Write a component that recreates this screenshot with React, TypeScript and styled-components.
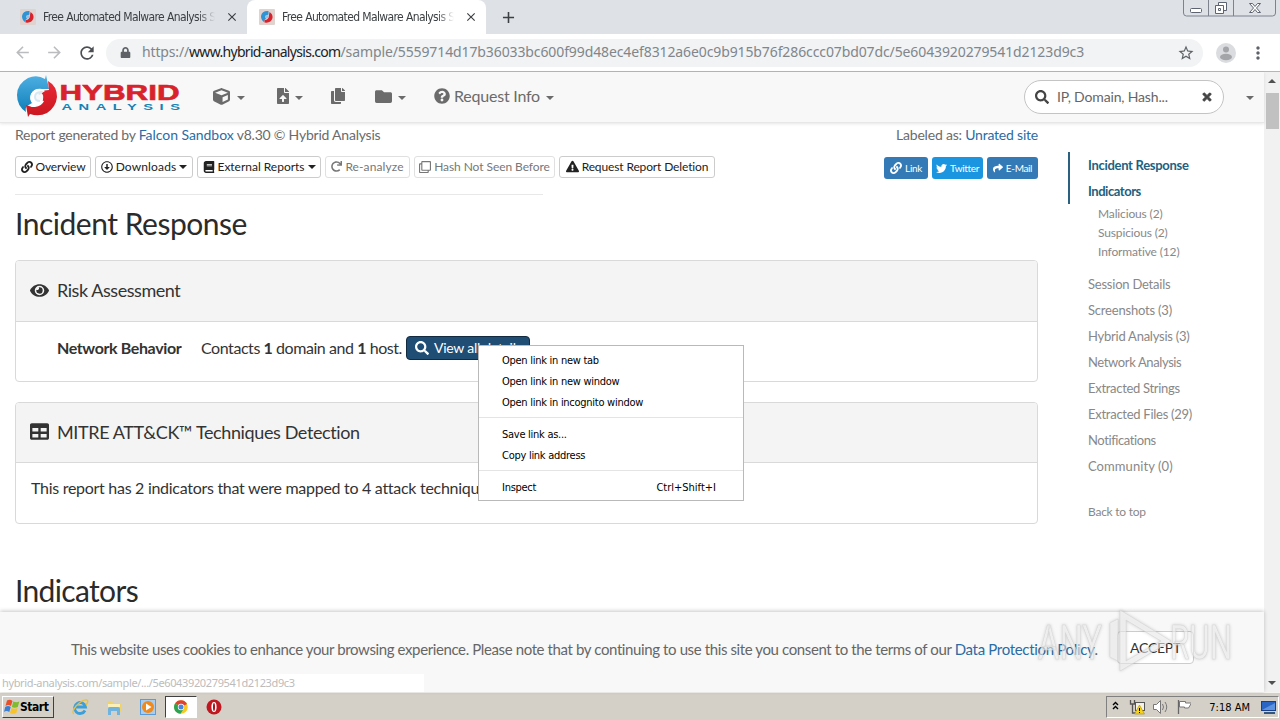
import styled, { createGlobalStyle, css } from "styled-components";
import {
  FaBook,
  FaCopy,
  FaCube,
  FaEye,
  FaExclamationTriangle,
  FaFileUpload,
  FaFolder,
  FaLink,
  FaLock,
  FaQuestionCircle,
  FaRedo,
  FaRegArrowAltCircleDown,
  FaRegClone,
  FaSearch,
  FaShare,
  FaTable,
  FaTimes,
  FaTwitter,
} from "react-icons/fa";
import {
  MdAdd,
  MdArrowBack,
  MdArrowForward,
  MdClose,
  MdMoreVert,
  MdRefresh,
  MdStarBorder,
} from "react-icons/md";

const theme = {
  page: `Lato, "Open Sans", sans-serif`,
  system: `"DejaVu Sans Condensed", "DejaVu Sans", sans-serif`,
  url: `"Noto Sans", sans-serif`,
  link: "#2a6ca5",
  border: "#d9d9d9",
};

const tabs = [
  { title: "Free Automated Malware Analysis Se", active: false },
  { title: "Free Automated Malware Analysis Se", active: true },
];

const sections = [
  { label: "Session Details", ls: -0.22 },
  { label: "Screenshots (3)", ls: -0.2 },
  { label: "Hybrid Analysis (3)", ls: -0.24 },
  { label: "Network Analysis", ls: -0.38 },
  { label: "Extracted Strings", ls: -0.3 },
  { label: "Extracted Files (29)", ls: -0.27 },
  { label: "Notifications", ls: -0.4 },
  { label: "Community (0)", ls: 0.07 },
];

function App() {
  return (
    <>
      <GlobalStyle />
      <Screen>
        <TabStrip>
          {tabs.map((tab, i) => (
            <Tab key={i} $active={tab.active}>
              <Favicon />
              <TabTitle>{tab.title}</TabTitle>
              <MdClose size={14} />
            </Tab>
          ))}
          <NewTab>
            <MdAdd size={19} />
          </NewTab>
          <WindowButtons />
        </TabStrip>

        <Toolbar>
          <NavIcon $muted>
            <MdArrowBack size={19} />
          </NavIcon>
          <NavIcon $muted>
            <MdArrowForward size={19} />
          </NavIcon>
          <NavIcon>
            <MdRefresh size={20} />
          </NavIcon>
          <Omnibox>
            <FaLock size={11} color="#5f6368" />
            <Url>
              <UrlPart $ls={-0.15}>https://</UrlPart>
              <UrlPart $ls={-0.69} $host>www.hybrid-analysis.com</UrlPart>
              <UrlPart $ls={-0.11}>
                /sample/5559714d17b36033bc600f99d48ec4ef8312a6e0c9b915b76f286ccc07bd07dc/5e6043920279541d2123d9c3
              </UrlPart>
            </Url>
            <MdStarBorder size={18} color="#5f6368" />
          </Omnibox>
          <Avatar />
          <MdMoreVert size={20} color="#5f6368" />
        </Toolbar>

        <Viewport>
          <Page>
            <Navbar>
              <Logo />
              <NavItem $width={62} $gap={7}>
                <FaCube size={17} />
                <Caret />
              </NavItem>
              <NavItem $width={55} $gap={4}>
                <FaFileUpload size={16} />
                <Caret />
              </NavItem>
              <NavItem $width={45}>
                <FaCopy size={16} />
              </NavItem>
              <NavItem $width={59}>
                <FaFolder size={17} />
                <Caret />
              </NavItem>
              <NavItem $width={130}>
                <FaQuestionCircle size={16} />
                <NavText>Request Info</NavText>
                <Caret />
              </NavItem>
              <SearchBox>
                <FaSearch size={14} />
                <SearchText>IP, Domain, Hash...</SearchText>
                <FaTimes size={12} stroke="currentColor" strokeWidth={36} />
              </SearchBox>
              <Caret />
            </Navbar>

            <Content>
              <Report>
                <MetaRow>
                  <Text $ls={-0.25}>
                    Report generated by <Link $ls={-0.05}>Falcon Sandbox</Link>
                    <Text $ls={-0.22}> v8.30 © Hybrid Analysis</Text>
                  </Text>
                  <Text $ls={-0.21}>
                    Labeled as: <Link>Unrated site</Link>
                  </Text>
                </MetaRow>
                <ButtonRow>
                  <Button $width={76} $ls={-0.14}>
                    <FaLink />
                    Overview
                  </Button>
                  <Button $width={98} $ls={0.15}>
                    <FaRegArrowAltCircleDown />
                    Downloads
                    <Caret $small />
                  </Button>
                  <Button $width={124} $ls={-0.02}>
                    <FaBook />
                    External Reports
                    <Caret $small />
                  </Button>
                  <Button $width={85} $ls={0.1} $disabled>
                    <FaRedo size={11} />
                    Re-analyze
                  </Button>
                  <Button $width={141} $ls={-0.07} $disabled>
                    <FaRegClone />
                    Hash Not Seen Before
                  </Button>
                  <Button $width={156} $ls={-0.13}>
                    <FaExclamationTriangle size={13} />
                    Request Report Deletion
                  </Button>
                  <ShareGroup>
                    <ShareButton $width={44}>
                      <FaLink size={12} />
                      Link
                    </ShareButton>
                    <ShareButton $width={51} $bg="#1b95e0">
                      <FaTwitter size={11} />
                      Twitter
                    </ShareButton>
                    <ShareButton $width={51}>
                      <FaShare size={10} />
                      E-Mail
                    </ShareButton>
                  </ShareGroup>
                </ButtonRow>
                <Divider />

                <Heading $ls={-0.48}>Incident Response</Heading>

                <Card>
                  <CardHeader $height={61} $ls={-0.44}>
                    <FaEye size={19} />
                    Risk Assessment
                  </CardHeader>
                  <CardBody $height={50} $indent>
                    <Label>Network Behavior</Label>
                    <Text $ls={-0.44}>
                      Contacts <Count>1</Count> domain and <Count>1</Count> host.
                    </Text>
                    <DetailsButton>
                      <FaSearch size={14} />
                      View all details
                    </DetailsButton>
                  </CardBody>
                </Card>

                <Card>
                  <CardHeader $height={60} $ls={-0.38}>
                    <FaTable size={19} />
                    MITRE ATT&amp;CK™ Techniques Detection
                  </CardHeader>
                  <CardBody $height={49}>
                    <Text $ls={-0.285}>
                      This report has 2 indicators that were mapped to 4 attack techniques
                    </Text>
                  </CardBody>
                </Card>

                <Heading $ls={-0.65} $last>
                  Indicators
                </Heading>
              </Report>

              <Sidebar>
                <ActiveGroup>
                  <SideLink $active $ls={-0.3}>Incident Response</SideLink>
                  <SideLink $active $ls={-0.45}>Indicators</SideLink>
                </ActiveGroup>
                <SubList>
                  <SubLink>Malicious (2)</SubLink>
                  <SubLink>Suspicious (2)</SubLink>
                  <SubLink>Informative (12)</SubLink>
                </SubList>
                {sections.map((s) => (
                  <SideLink key={s.label} $ls={s.ls}>
                    {s.label}
                  </SideLink>
                ))}
                <BackToTop>Back to top</BackToTop>
              </Sidebar>
            </Content>

            <CookieBar>
              <CookieText>
                This website uses cookies to enhance your browsing experience. Please note that by
                continuing to use this site you consent to the terms of our{" "}
                <Link $ls={-0.32}>Data Protection Policy</Link>.
              </CookieText>
              <AcceptButton>ACCEPT</AcceptButton>
            </CookieBar>
          </Page>

          <Scrollbar>
            <Arrow $up />
            <Thumb />
            <Arrow />
          </Scrollbar>

          <StatusBubble>hybrid-analysis.com/sample/.../5e6043920279541d2123d9c3</StatusBubble>
          <ContextMenu>
            <MenuItem>Open link in new tab</MenuItem>
            <MenuItem>Open link in new window</MenuItem>
            <MenuItem>Open link in incognito window</MenuItem>
            <MenuLine />
            <MenuItem>Save link as...</MenuItem>
            <MenuItem>Copy link address</MenuItem>
            <MenuLine />
            <MenuItem>
              Inspect <Shortcut>Ctrl+Shift+I</Shortcut>
            </MenuItem>
          </ContextMenu>
          <Watermark />
        </Viewport>

        <Taskbar>
          <StartButton>
            <WindowsFlag />
            Start
          </StartButton>
          <TaskIcons />
          <Tray>
            <TrayIcons />
            <Clock>7:18 AM</Clock>
            <DesktopIcon />
          </Tray>
        </Taskbar>
      </Screen>
    </>
  );
}

export default App;

function Favicon() {
  return (
    <svg width="16" height="16" viewBox="0 0 16 16">
      <rect width="16" height="16" rx="1" fill="#e0d3cf" />
      <path d="M9.500 2Q3 1.500 2 7Q2 11 5 13Q5 10.500 7 9.500Q5 6.500 9.500 5.500z" fill="#2f93d4" />
      <path d="M10.500 3Q14 5 13.500 9Q12 14.500 5.500 13.500L5.500 11Q10 11 10 6z" fill="#d8232c" />
      <circle cx="7.800" cy="7.800" r="1.800" fill="#8fc4e8" />
    </svg>
  );
}

function WindowButtons() {
  return (
    <WindowSvg width="94" height="17" viewBox="0 0 94 17" fill="none" stroke="#5d6370">
      <path d="M.5 0v13q0 3 3 3h86q3 0 3-3V0M25.500 0v16M50.500 0v16" stroke="#7d828c" />
      <rect x="7.500" y="8.500" width="11" height="4" rx="1" fill="#fff" />
      <path d="M35.500 5V2.500h8v8H41M32.500 5.500h8v8h-8zM35.500 8.500h2v2h-2z" fill="#fff" />
      <path d="M66.500 3.500h3l2.500 3 2.500-3h3l-4 4.500 4 4.500h-3L72 9.500l-2.500 3h-3l4-4.500z" fill="#fff" />
    </WindowSvg>
  );
}

function Avatar() {
  return (
    <svg width="20" height="20" viewBox="0 0 20 20">
      <circle cx="10" cy="10" r="10" fill="#dadcdf" />
      <circle cx="10" cy="6.500" r="3" fill="#a3a5a8" />
      <ellipse cx="10" cy="14" rx="6" ry="3.300" fill="#a3a5a8" />
    </svg>
  );
}

function Logo() {
  return (
    <LogoSvg width="168" height="46" viewBox="0 0 168 46">
      <defs>
        <linearGradient id="blue" x1="0" y1="0" x2="0" y2="1">
          <stop offset="0" stopColor="#4fb0e4" />
          <stop offset="1" stopColor="#0f7fb8" />
        </linearGradient>
        <linearGradient id="red" x1="0" y1="0" x2="0" y2="1">
          <stop offset="0" stopColor="#ea2a35" />
          <stop offset="1" stopColor="#c9161f" />
        </linearGradient>
      </defs>
      <path
        d="M31 2L30 6Q22 1 13 5Q2 11 2 22Q2 33 11 39Q10 35 12 33L17 30Q14 26 16 21Q19 16 24 16L34 16Z"
        fill="url(#blue)"
      />
      <path
        d="M33 8Q42 13 42 24Q41 34 32 40Q24 44 15 41L13 44L11 32L17 34L26 30Q29 27 28 22L25 18L34 17Z"
        fill="url(#red)"
      />
      <path d="M30 18L27 16Q19 15 16 21Q14 26 18 31L16 34L20 34Q27 33 29 28L25 27Q20 28 20 24Q21 20 27 20Z" fill="#fff" />
      <path d="M24 21.500L26 19Q20 19 20 24Q20 28 25 28" fill="none" stroke="#d5e9f5" strokeWidth="2" />
      <text
        x="44.500"
        y="27"
        textLength="120"
        lengthAdjust="spacingAndGlyphs"
        fill="#d8232c"
        stroke="#d8232c"
        strokeWidth=".6"
        fontFamily="Liberation Sans"
        fontWeight="700"
        fontSize="21.500"
      >
        HYBRID
      </text>
      <text
        transform="scale(1.5 1)"
        x="31"
        y="37.500"
        textLength="79"
        fill="#1583b5"
        fontFamily="Liberation Sans"
        fontWeight="700"
        fontSize="9.800"
      >
        ANALYSIS
      </text>
    </LogoSvg>
  );
}

function Watermark() {
  return (
    <WatermarkSvg
      width="204"
      height="68"
      viewBox="0 0 204 68"
      fill="#fff"
      fillOpacity=".55"
      stroke="#d4d4d4"
      strokeWidth=".6"
    >
      <text x="4" y="52" textLength="64" lengthAdjust="spacingAndGlyphs" fontFamily="Roboto" fontSize="49">
        ANY
      </text>
      <path d="M76 16l8-4v42l-8-4zM86 3l51 31-51 30zM92 13v41l35-20z" fillRule="evenodd" />
      <text x="136" y="52" textLength="62" lengthAdjust="spacingAndGlyphs" fontFamily="Roboto" fontSize="49">
        RUN
      </text>
    </WatermarkSvg>
  );
}

function WindowsFlag() {
  return (
    <svg width="16" height="16" viewBox="0 0 16 16">
      <path d="M3 1.500q3-1.500 5.500 0.500L7 7q-3-2-5.500 0z" fill="#e8502a" />
      <path d="M9.300 2.500q3 1.500 6 0L13.800 8q-3 1.500-6 0z" fill="#7fba2f" />
      <path d="M1.200 8q3-2 5.500 0L5.300 13q-3-2-5.300 0z" fill="#3a7fd5" />
      <path d="M7.500 8.900q3 1.500 6 0L12.300 14q-3 1.500-6.300 0z" fill="#f7c328" />
    </svg>
  );
}

function TaskIcons() {
  return (
    <IconStrip>
      <TaskCell>
        <svg width="18" height="18" viewBox="0 0 18 18" fill="none">
          <path d="M14 12.500A5.500 5.500 0 1 1 14.500 9H5" stroke="#3aa0dc" strokeWidth="2.800" />
          <path d="M3 16Q0 15 5 8Q12 1 16 2Q18 3 15 7" stroke="#e9bf3c" strokeWidth="1.300" />
        </svg>
      </TaskCell>
      <TaskCell>
        <svg width="18" height="18" viewBox="0 0 18 18">
          <path d="M2 3h5l1 2h8v9H2z" fill="#efd36a" />
          <path d="M3 6h12v3H3z" fill="#fbf0b8" />
          <path d="M3 17v-6q0-2 2-2h8q2 0 2 2v6h-3v-4H6v4z" fill="#6fb3de" />
        </svg>
      </TaskCell>
      <TaskCell>
        <svg width="18" height="18" viewBox="0 0 18 18">
          <rect x="1.500" y="1.500" width="15" height="15" fill="#a9cdee" stroke="#5b9bd8" />
          <circle cx="9" cy="9" r="6" fill="#f08a1c" />
          <path d="M7 5.500l5.500 3.500L7 12.500z" fill="#fff" />
        </svg>
      </TaskCell>
      <TaskCell $pressed>
        <svg width="14" height="14" viewBox="0 0 14 14">
          <circle cx="7" cy="7" r="6.800" fill="#f9c922" />
          <path d="M7 7L1 3.500A6.800 6.800 0 0 1 13 4z" fill="#de4234" />
          <path d="M7 7L1 3.500A6.800 6.800 0 0 0 6.500 13.800L9.500 9z" fill="#2da350" />
          <circle cx="7" cy="7" r="3.200" fill="#fff" />
          <circle cx="7" cy="7" r="2.500" fill="#4a86e0" />
        </svg>
      </TaskCell>
      <TaskCell>
        <svg width="16" height="16" viewBox="0 0 16 16">
          <circle cx="8" cy="8" r="7.500" fill="#c01820" />
          <ellipse cx="8" cy="8" rx="2.600" ry="5" fill="#fff" />
          <ellipse cx="8" cy="8" rx="1" ry="4" fill="#a01018" />
        </svg>
      </TaskCell>
    </IconStrip>
  );
}

function TrayIcons() {
  return (
    <svg width="80" height="18" viewBox="0 0 80 18" fill="none">
      <path d="M2 7L4.500 4.500 7 7M2 11L4.500 8.500 7 11" stroke="#000" strokeWidth="1.400" />
      <path d="M19.500 2v4h4V2M21.500 6v9h6" stroke="#555" strokeWidth="1.300" />
      <rect x="24.500" y="4.500" width="9" height="8" fill="#f5f1e6" stroke="#555" />
      <path d="M28.500 7l5 9h-10z" fill="#f4d21f" stroke="#a88a00" strokeWidth=".6" />
      <path d="M28.500 10v3M28.500 14v1" stroke="#000" />
      <path d="M42.500 6.500h3l4-4v13l-4-4h-3z" fill="#fff" stroke="#777" />
      <path d="M51.500 6q2 3 0 6M54 4q3.500 5 0 10" stroke="#777" />
      <path d="M67.500 2v14" stroke="#666" strokeWidth="1.300" />
      <path d="M68.500 3.500h6v1.500h6l-3 5h-4V9h-5z" fill="#fff" stroke="#777" />
    </svg>
  );
}

function DesktopIcon() {
  return (
    <svg width="15" height="15" viewBox="0 0 15 15">
      <rect x=".5" y="1.500" width="14" height="9" fill="#2a65c4" stroke="#1c3f86" />
      <path d="M1 10L14 3v7z" fill="#5b93e0" />
      <path d="M3 12h11v2H3z" fill="#35577e" />
    </svg>
  );
}

const GlobalStyle = createGlobalStyle`
  * {
    box-sizing: border-box;
  }

  body {
    margin: 0;
    background: #fff;
  }

  svg {
    flex: none;
  }
`;

const Screen = styled.div`
  width: 1280px;
  height: 720px;
  display: flex;
  flex-direction: column;
  overflow: hidden;
  white-space: nowrap;
`;

const TabStrip = styled.div`
  height: 34px;
  flex: none;
  display: flex;
  padding-left: 8px;
  background: #dee1e6;
  font-family: ${theme.system};
`;

const Tab = styled.div<{ $active: boolean }>`
  width: 239px;
  height: 34px;
  display: flex;
  align-items: center;
  padding: 0 8px 0 12px;
  color: #3c4043;
  background: ${({ $active }) => ($active ? "#fff" : "transparent")};
  border-radius: 8px 8px 0 0;
`;

const TabTitle = styled.div`
  width: 176px;
  margin: 0 10px 0 7px;
  overflow: hidden;
  font-size: 12px;
  letter-spacing: -0.62px;
  mask-image: linear-gradient(to right, #000 90%, transparent);
`;

const NewTab = styled.div`
  display: flex;
  align-items: center;
  margin-left: 13px;
  color: #3c4043;
`;

const WindowSvg = styled.svg`
  margin-left: auto;
  margin-right: 3px;
`;

const Toolbar = styled.div`
  height: 38px;
  flex: none;
  display: flex;
  align-items: center;
  padding: 0 12px 0 13px;
  background: #fff;
  border-bottom: 1px solid #b6b6b6;

  > svg:last-child {
    margin-left: 12px;
  }
`;

const NavIcon = styled.div<{ $muted?: boolean }>`
  width: 32px;
  display: flex;
  color: ${({ $muted }) => ($muted ? "#babcbe" : "#4b4e52")};
`;

const Omnibox = styled.div`
  width: 1097px;
  height: 28px;
  display: flex;
  align-items: center;
  margin: 0 13px 0 -3px;
  padding: 0 8px 0 14px;
  border-radius: 14px;
  background: #f1f3f4;
`;

const Url = styled.div`
  flex: 1;
  margin: -2px 0 0 11px;
  font-family: ${theme.url};
  font-size: 14px;
  line-height: 28px;
`;

const UrlPart = styled.span<{ $ls: number; $host?: boolean }>`
  color: ${({ $host }) => ($host ? "#202124" : "#80868b")};
  letter-spacing: ${({ $ls }) => $ls}px;
`;

const Viewport = styled.div`
  position: relative;
  height: 620px;
  flex: none;
  display: flex;
  font-family: ${theme.page};
`;

const Page = styled.div`
  width: 1264px;
  display: flex;
  flex-direction: column;
`;

const Navbar = styled.div`
  height: 51px;
  flex: none;
  display: flex;
  align-items: center;
  padding: 0 10px 2px 15px;
  color: #6b6b6b;
  background: #f8f8f8;
  border-bottom: 1px solid #e7e7e7;
  box-shadow: 0 1px 3px rgba(0, 0, 0, 0.1);
  z-index: 1;
`;

const LogoSvg = styled.svg`
  margin-right: 30px;
`;

const NavItem = styled.div<{ $width: number; $gap?: number }>`
  width: ${({ $width }) => $width}px;
  display: flex;
  align-items: center;
  gap: ${({ $gap }) => $gap ?? 6}px;
`;

const NavText = styled.span`
  margin: 0 0 1px -2px;
  font-size: 16px;
  letter-spacing: -0.22px;
`;

const Caret = styled.span<{ $small?: boolean }>`
  margin-top: ${({ $small }) => ($small ? 0 : 3)}px;
  border: 4px solid transparent;
  border-top-color: currentColor;
  border-bottom: 0;
`;

const SearchBox = styled.div`
  width: 200px;
  height: 34px;
  display: flex;
  align-items: center;
  margin: 2px 22px 0 auto;
  padding: 0 10px 1px 10px;
  color: #444;
  background: #fff;
  border: 1px solid #c4c4c4;
  border-radius: 17px;
`;

const SearchText = styled.span`
  flex: 1;
  margin-left: 8px;
  color: #666;
  font-size: 14px;
  letter-spacing: -0.16px;
`;

const Content = styled.div`
  flex: 1;
  min-height: 0;
  display: flex;
  overflow: hidden;
`;

const Report = styled.div`
  width: 1023px;
  margin-left: 15px;
  color: #333;
`;

const MetaRow = styled.div`
  height: 24px;
  display: flex;
  justify-content: space-between;
  color: #6b6b6b;
  font-size: 14px;
  line-height: 24px;
`;

const Text = styled.span<{ $ls?: number }>`
  letter-spacing: ${({ $ls }) => $ls ?? 0}px;
`;

const Link = styled.span<{ $ls?: number }>`
  color: ${theme.link};
  ${({ $ls }) =>
    $ls !== undefined &&
    css`
      letter-spacing: ${$ls}px;
    `}
`;

const ButtonRow = styled.div`
  display: flex;
  gap: 4px;
  padding-top: 9px;
`;

const Button = styled.div<{ $width: number; $ls: number; $disabled?: boolean }>`
  width: ${({ $width }) => $width}px;
  height: 22px;
  display: flex;
  align-items: center;
  justify-content: center;
  gap: 3px;
  padding-bottom: 1px;
  border: 1px solid ${({ $disabled }) => ($disabled ? "#e0e0e0" : "#ccc")};
  border-radius: 3px;
  color: ${({ $disabled }) => ($disabled ? "#777" : "#222")};
  font-size: 12px;
  letter-spacing: ${({ $ls }) => $ls}px;
`;

const ShareGroup = styled.div`
  display: flex;
  gap: 4px;
  margin: 1px 0 -1px auto;
`;

const ShareButton = styled.div<{ $width: number; $bg?: string }>`
  width: ${({ $width }) => $width}px;
  height: 22px;
  display: flex;
  align-items: center;
  justify-content: center;
  gap: 3px;
  color: #fff;
  background: ${({ $bg }) => $bg ?? "#337ab7"};
  border-radius: 3px;
  font-size: 10px;
  letter-spacing: -0.35px;
`;

const Divider = styled.div`
  width: 528px;
  margin-top: 16px;
  border-top: 1px solid #e8e8e8;
`;

const Heading = styled.div<{ $ls: number; $last?: boolean }>`
  height: 65px;
  padding-top: ${({ $last }) => ($last ? 27 : 9)}px;
  color: #2b2b2b;
  font-size: 30px;
  line-height: 38px;
  letter-spacing: ${({ $ls }) => $ls}px;
`;

const Card = styled.div`
  height: 122px;
  margin-bottom: 20px;
  border: 1px solid ${theme.border};
  border-radius: 4px;
  overflow: hidden;
`;

const CardHeader = styled.div<{ $height: number; $ls: number }>`
  height: ${({ $height }) => $height}px;
  display: flex;
  align-items: center;
  gap: 8px;
  padding: 0 0 2px 14px;
  background: #f4f4f4;
  border-bottom: 1px solid ${theme.border};
  font-size: 18px;
  letter-spacing: ${({ $ls }) => $ls}px;
`;

const CardBody = styled.div<{ $height: number; $indent?: boolean }>`
  height: ${({ $height }) => $height}px;
  display: flex;
  align-items: center;
  padding-left: ${({ $indent }) => ($indent ? 41 : 15)}px;
  font-size: 16px;
`;

const Label = styled.span`
  width: 144px;
  font-weight: 700;
  letter-spacing: -0.38px;
`;

const Count = styled.span`
  font-weight: 700;
`;

const DetailsButton = styled.div`
  width: 124px;
  height: 24px;
  display: flex;
  align-items: center;
  gap: 5px;
  margin: 2px 0 0 4px;
  padding: 0 0 1px 8px;
  color: #fff;
  background: #204d74;
  border: 1px solid #122b40;
  border-radius: 4px;
  font-size: 14px;
  letter-spacing: -0.24px;
`;

const Sidebar = styled.div`
  width: 190px;
  margin: 29px 0 0 30px;
  color: #888;
`;

const ActiveGroup = styled.div`
  border-left: 2px solid #2a6080;

  > div {
    padding-left: 18px;
  }
`;

const SideLink = styled.div<{ $active?: boolean; $ls: number }>`
  height: 26px;
  padding-left: 20px;
  color: ${({ $active }) => ($active ? "#225f80" : "inherit")};
  font-size: 13px;
  font-weight: ${({ $active }) => ($active ? 700 : 400)};
  line-height: 26px;
  letter-spacing: ${({ $ls }) => $ls}px;
`;

const SubList = styled.div`
  padding-left: 30px;
  margin-bottom: 10px;
`;

const SubLink = styled.div`
  height: 19px;
  font-size: 12px;
  line-height: 19px;
  letter-spacing: -0.14px;
`;

const BackToTop = styled.div`
  padding: 25px 0 0 20px;
  font-size: 12px;
  letter-spacing: -0.25px;
`;

const CookieBar = styled.div`
  height: 80px;
  flex: none;
  display: flex;
  align-items: center;
  padding: 0 70px 6px 71px;
  background: #f8f8f8;
  box-shadow: 0 -1px 4px rgba(0, 0, 0, 0.22);
  z-index: 1;
`;

const CookieText = styled.div`
  width: 1046px;
  color: #666;
  font-size: 15px;
  letter-spacing: -0.386px;
`;

const AcceptButton = styled.div`
  width: 77px;
  height: 33px;
  display: flex;
  align-items: center;
  justify-content: center;
  margin: -3px 0 0 2px;
  color: #333;
  background: #fff;
  border: 1px solid #ccc;
  border-radius: 4px;
  font-size: 14px;
  letter-spacing: -0.25px;
`;

const Scrollbar = styled.div`
  width: 16px;
  display: flex;
  flex-direction: column;
  align-items: center;
  padding: 7px 0;
  background: #f1f1f1;
`;

const Arrow = styled.div<{ $up?: boolean }>`
  border: 4px solid transparent;
  ${({ $up }) =>
    $up
      ? css`
          border-bottom-color: #505050;
          border-top: 0;
        `
      : css`
          border-top-color: #505050;
          border-bottom: 0;
          margin-top: auto;
        `}
`;

const Thumb = styled.div`
  width: 13px;
  height: 36px;
  margin-top: 10px;
  background: #c1c1c1;
`;

const StatusBubble = styled.div`
  position: absolute;
  left: 0;
  bottom: 0;
  width: 424px;
  height: 18px;
  padding-left: 2px;
  color: #bcbcbc;
  background: #fff;
  font: 11px ${theme.url};
  line-height: 18px;
  letter-spacing: -0.36px;
  z-index: 2;
`;

const ContextMenu = styled.div`
  position: absolute;
  left: 478px;
  top: 273px;
  width: 266px;
  height: 156px;
  padding: 4px 0;
  color: #000;
  background: #fff;
  border: 1px solid #b9b9b9;
  font-family: ${theme.system};
  z-index: 3;
`;

const MenuItem = styled.div`
  height: 21px;
  display: flex;
  justify-content: space-between;
  padding: 0 27px 0 23px;
  font-size: 11px;
  line-height: 21px;
  letter-spacing: -0.27px;
`;

const MenuLine = styled.div`
  margin: 4px 0 6px;
  border-top: 1px solid #e4e4e4;
`;

const Shortcut = styled.span`
  letter-spacing: 0;
`;

const WatermarkSvg = styled.svg`
  position: absolute;
  left: 1034px;
  top: 535px;
  z-index: 4;
  filter: drop-shadow(0 0 1.5px rgba(0, 0, 0, 0.25));
`;

const Taskbar = styled.div`
  height: 28px;
  flex: none;
  display: flex;
  align-items: center;
  padding: 1px 1px 0 2px;
  background: #d4d0c8;
  border-top: 1px solid #f5f4f0;
  font-family: ${theme.system};
`;

const StartButton = styled.div`
  width: 52px;
  height: 22px;
  display: flex;
  align-items: center;
  padding-left: 1px;
  border: 1px solid #fff;
  border-right-color: #404040;
  border-bottom-color: #404040;
  font-size: 12px;
  font-weight: 700;
  letter-spacing: -0.45px;
`;

const IconStrip = styled.div`
  display: flex;
  margin-left: 9px;
`;

const TaskCell = styled.div<{ $pressed?: boolean }>`
  width: ${({ $pressed }) => ($pressed ? 32 : 34)}px;
  height: 22px;
  display: flex;
  align-items: center;
  justify-content: center;
  ${({ $pressed }) =>
    $pressed &&
    css`
      background: #fff;
      border: 1px solid #404040;
      border-right-color: #fff;
      border-bottom-color: #fff;
    `}
`;

const Tray = styled.div`
  height: 22px;
  display: flex;
  align-items: center;
  gap: 3px;
  margin-left: auto;
  padding: 0 2px 0 4px;
  border: 1px solid #808080;
  border-right-color: #fff;
  border-bottom-color: #fff;
`;

const Clock = styled.span`
  margin: 0 8px 0 15px;
  font-size: 11px;
`;
